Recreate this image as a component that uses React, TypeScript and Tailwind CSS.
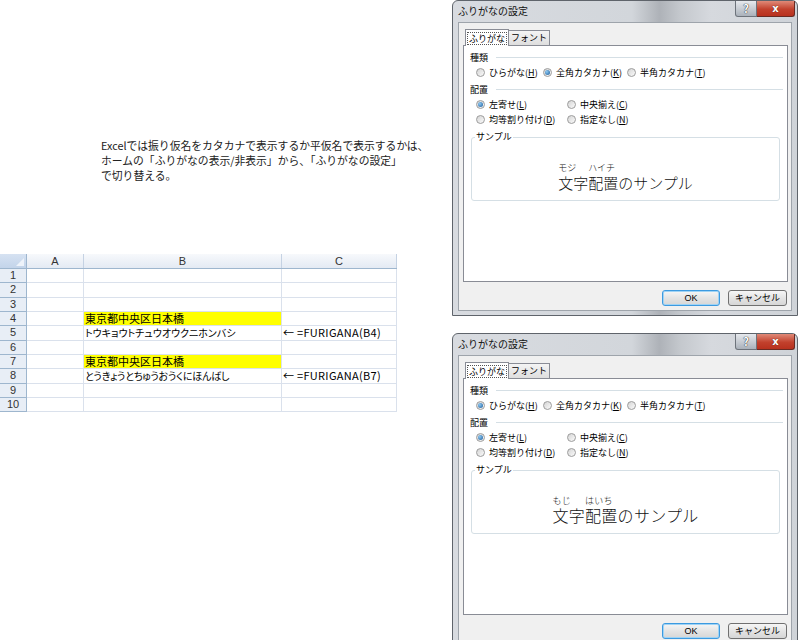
import React from 'react';

// Japanese UI text
const jp = "font-['Noto_Sans_CJK_JP',sans-serif]";

const cols = [
  { key: 'A', w: 'w-[57px]' },
  { key: 'B', w: 'w-[198px]' },
  { key: 'C', w: 'w-[115px]' },
];

type Row = { n: number; b?: string; c?: string; fill?: boolean; kana?: 'kata' | 'hira' };

const rows: Row[] = [
  { n: 1 },
  { n: 2 },
  { n: 3 },
  { n: 4, b: '東京都中央区日本橋', fill: true },
  { n: 5, b: 'トウキョウトチュウオウクニホンバシ', c: '← =FURIGANA(B4)', kana: 'kata' },
  { n: 6 },
  { n: 7, b: '東京都中央区日本橋', fill: true },
  { n: 8, b: 'とうきょうとちゅうおうくにほんばし', c: '← =FURIGANA(B7)', kana: 'hira' },
  { n: 9 },
  { n: 10 },
];

function Note() {
  return (
    <p className={`pl-[101px] pt-[138px] text-[10.8px] leading-[15px] text-[#222] ${jp}`}>
      Excelでは振り仮名をカタカナで表示するか平仮名で表示するかは、
      <br />
      ホームの「ふりがなの表示/非表示」から、「ふりがなの設定」
      <br />
      で切り替える。
    </p>
  );
}

function Sheet() {
  return (
    <div className={`mt-[71px] w-[397px] text-[11px] text-black ${jp}`}>
      <div className="flex h-[15px] border-b border-[#9eb6ce]">
        <div className="relative w-[27px] border-r border-[#9eb6ce] bg-[linear-gradient(#d6e2f2,#c3d4ea)]">
          <span className="absolute right-[2px] bottom-[2px] w-0 h-0 border-l-[8px] border-l-transparent border-b-[8px] border-b-[#eef3fa]" />
        </div>
        {cols.map((c) => (
          <div
            key={c.key}
            className={`${c.w} border-r border-[#c5d2e3] bg-[linear-gradient(#f7f9fc,#e4eaf3)] flex items-center justify-center text-[#333] font-['Liberation_Sans',sans-serif] text-[11px]`}
          >
            {c.key}
          </div>
        ))}
      </div>
      {rows.map((r) => (
        <div key={r.n} className="flex h-[14.33px] leading-[13px]">
          <div className="w-[27px] border-r border-b border-[#9eb6ce] bg-[#e8eef6] flex items-center justify-center text-[#333] font-['Liberation_Sans',sans-serif]">
            {r.n}
          </div>
          <div className="w-[57px] border-r border-b border-[#dae1ec]" />
          <div
            className={`w-[198px] border-r border-b border-[#dae1ec] pl-[1px] whitespace-nowrap [font-feature-settings:'palt'] ${
              r.fill ? 'bg-[#ffff00]' : ''
            } ${r.kana === 'kata' ? 'text-[10px]' : ''} ${r.kana === 'hira' ? 'text-[10px] tracking-[-0.2px]' : ''}`}
          >
            {r.b}
          </div>
          <div className="w-[115px] border-r border-b border-[#dae1ec] pl-[1px] whitespace-nowrap tracking-[0.3px]">{r.c}</div>
        </div>
      ))}
    </div>
  );
}

function Radio({ on }: { on?: boolean }) {
  return (
    <span className="w-[9px] h-[9px] rounded-full border border-[#9c9c9c] bg-[linear-gradient(135deg,#d4d4d4,#fbfbfb)] flex items-center justify-center shrink-0">
      {on && <span className="w-[5px] h-[5px] rounded-full bg-[radial-gradient(circle_at_35%_35%,#8cc8f2,#1d5c9a)]" />}
    </span>
  );
}

function Option({ on, label, k, w }: { on?: boolean; label: string; k: string; w: string }) {
  return (
    <label className={`flex items-center gap-[4px] ${w}`}>
      <Radio on={on} />
      <span>
        {label}(<span className="underline">{k}</span>)
      </span>
    </label>
  );
}

function Section({ title }: { title: string }) {
  return (
    <div className="flex items-center h-[15px] pl-[6px] pr-[4px]">
      <span>{title}</span>
      <span className="flex-1 h-px bg-[#d5dfe5] ml-[8px]" />
    </div>
  );
}

function Reading({ base, ruby }: { base: string; ruby: string }) {
  return (
    <span className="flex flex-col items-start">
      <span className="text-[9px] leading-[10px] mb-[2px]">{ruby}</span>
      <span className="leading-[15px]">{base}</span>
    </span>
  );
}

function FuriganaDialog({ hiragana }: { hiragana?: boolean }) {
  return (
    <div
      className={`w-[346px] h-[316px] shrink-0 flex flex-col rounded-t-[6px] border border-[#5f646b] bg-[linear-gradient(90deg,#d8dbe0_0%,#d2d6db_52%,#aeb2b8_60%,#c4c8cd_66%,#d6d9de_75%,#cfd3d8_100%)] text-black text-[9px] ${jp}`}
    >
      {/* caption */}
      <div className="h-[21px] flex items-start justify-between pl-[5px] pr-[2px]">
        <span className="text-[10px] leading-[20px] text-[#111]">ふりがなの設定</span>
        <div className="flex">
          <span className="w-[22px] h-[16px] rounded-bl-[3px] border border-t-0 border-[#6d737b] bg-[linear-gradient(#e6e9ed,#aab1ba)] flex items-center justify-center text-[11px] font-bold text-white [text-shadow:0_0_1px_#222,0_0_1px_#222]">
            ?
          </span>
          <span className="w-[38px] h-[16px] rounded-br-[3px] border border-t-0 border-l-0 border-[#6a2a22] bg-[linear-gradient(#e08a78,#c2412d_55%,#b8311e)] flex items-center justify-center text-[10px] font-bold text-white font-['DejaVu_Sans',sans-serif] [text-shadow:0_0_1px_#3a0e08]">
            x
          </span>
        </div>
      </div>

      {/* client area */}
      <div className="mx-[5px] mb-[4px] flex-1 flex flex-col border border-[#9ea4ab] bg-[#f0f0f0] pt-[6px] pl-[4px] pr-[3px]">
        <div className="flex items-end h-[16px] pl-[2px]">
          <div className="relative z-10 h-[17px] -mb-px px-[2px] bg-white border border-b-0 border-[#898c95] flex items-center">
            <span className="px-[1px] leading-[11px] outline outline-1 outline-dotted outline-[#555]">ふりがな</span>
          </div>
          <div className="h-[15px] w-[41px] bg-[linear-gradient(#f4f4f4,#dedede)] border border-b-0 border-l-0 border-[#898c95] flex items-center justify-center">
            フォント
          </div>
        </div>

        <div className="h-[237px] bg-white border border-[#898c95] pt-[4px]">
          <Section title="種類" />
          <div className="flex items-center h-[15px] pl-[12px]">
            <Option on={hiragana} label="ひらがな" k="H" w="w-[67px]" />
            <Option on={!hiragana} label="全角カタカナ" k="K" w="w-[84px]" />
            <Option label="半角カタカナ" k="T" w="w-auto" />
          </div>
          <div className="mt-[2px]">
            <Section title="配置" />
          </div>
          <div className="flex items-center h-[15px] pl-[12px]">
            <Option on label="左寄せ" k="L" w="w-[91px]" />
            <Option label="中央揃え" k="C" w="w-auto" />
          </div>
          <div className="flex items-center h-[15px] pl-[12px]">
            <Option label="均等割り付け" k="D" w="w-[91px]" />
            <Option label="指定なし" k="N" w="w-auto" />
          </div>

          <fieldset className="mt-[4px] mx-[7px] border border-[#d5dfe5] rounded-[3px]">
            <legend className="ml-[3px] px-[1px] leading-[12px]">サンプル</legend>
            <div
              className={`h-[57px] flex justify-center items-end pb-[10px] text-[#111] font-light leading-[15px] ${
                hiragana ? 'text-[16px] tracking-[0.3px]' : 'text-[15px]'
              }`}
            >
              <Reading base="文字" ruby={hiragana ? 'もじ' : 'モジ'} />
              <Reading base="配置" ruby={hiragana ? 'はいち' : 'ハイチ'} />
              <span>のサンプル</span>
            </div>
          </fieldset>
        </div>

        <div className="mt-[8px] mr-[1px] flex justify-end gap-[8px]">
          <button className="w-[58px] h-[16px] rounded-[3px] border border-[#3c9ae0] bg-[linear-gradient(#f6f6f6,#e4e4e4_50%,#d6d6d6)] shadow-[inset_0_0_0_1px_#9fd3f5] text-[9px] leading-[14px] font-['Liberation_Sans',sans-serif]">
            OK
          </button>
          <button className="w-[59px] h-[16px] rounded-[3px] border border-[#707070] bg-[linear-gradient(#f6f6f6,#e4e4e4_50%,#d6d6d6)] text-[9px] leading-[14px]">
            キャンセル
          </button>
        </div>
      </div>
    </div>
  );
}

export default function App() {
  return (
    <div className="w-[800px] h-[640px] overflow-hidden bg-white flex">
      <div className="w-[452px] shrink-0">
        <Note />
        <Sheet />
      </div>
      <div className="w-[346px] flex flex-col gap-[17px]">
        <FuriganaDialog />
        <FuriganaDialog hiragana />
      </div>
    </div>
  );
}
